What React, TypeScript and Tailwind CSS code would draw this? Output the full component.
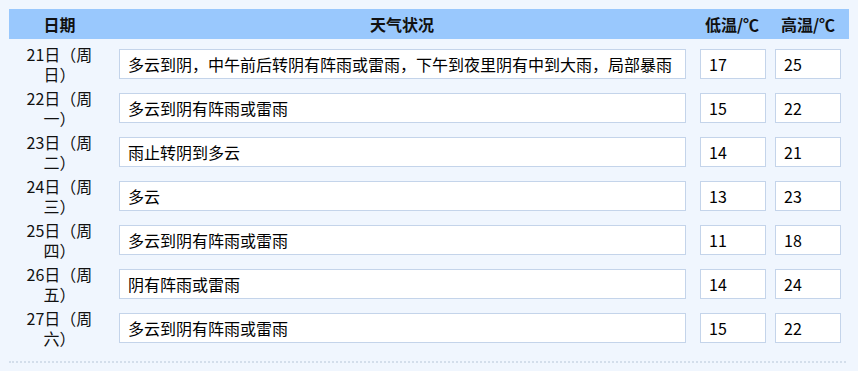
const rows = [
  { date: '21日（周日）', desc: '多云到阴，中午前后转阴有阵雨或雷雨，下午到夜里阴有中到大雨，局部暴雨', low: '17', high: '25' },
  { date: '22日（周一）', desc: '多云到阴有阵雨或雷雨', low: '15', high: '22' },
  { date: '23日（周二）', desc: '雨止转阴到多云', low: '14', high: '21' },
  { date: '24日（周三）', desc: '多云', low: '13', high: '23' },
  { date: '25日（周四）', desc: '多云到阴有阵雨或雷雨', low: '11', high: '18' },
  { date: '26日（周五）', desc: '阴有阵雨或雷雨', low: '14', high: '24' },
  { date: '27日（周六）', desc: '多云到阴有阵雨或雷雨', low: '15', high: '22' },
]

function Box({ value, className }: { value: string; className: string }) {
  return (
    <div className={`h-[30px] flex items-center bg-white border border-[#c4d4ea] pl-[8px] text-[16px] text-black whitespace-nowrap overflow-hidden ${className}`}>
      {value}
    </div>
  )
}

export default function App() {
  return (
    <div
      className="w-[858px] h-[371px] bg-[#f0f6fe] pt-[9px] px-[9px]"
      style={{ fontFamily: '"Noto Sans CJK SC", "Microsoft YaHei", sans-serif' }}
    >
      {/* header */}
      <div className="grid grid-cols-[101px_584px_76px_76px] h-[30px] items-center bg-[#99c8fd] text-[16px] font-bold text-[#111]">
        <div className="text-center">日期</div>
        <div className="text-center">天气状况</div>
        <div className="text-center">低温/℃</div>
        <div className="text-center">高温/℃</div>
      </div>

      <div className="mt-[3px]">
        {rows.map((r) => (
          <div key={r.date} className="grid grid-cols-[101px_584px_76px_76px] h-[44px] items-center">
            <div className="flex justify-center">
              <div className="w-[72px] text-center text-[16px] leading-[20px] text-[#111]">{r.date}</div>
            </div>
            <div className="pl-[9px]">
              <Box value={r.desc} className="w-[567px]" />
            </div>
            <div className="pl-[6px]">
              <Box value={r.low} className="w-[66px]" />
            </div>
            <div className="pl-[5px]">
              <Box value={r.high} className="w-[66px]" />
            </div>
          </div>
        ))}
      </div>

      <div className="mt-[11px] w-[837px] border-t-2 border-dotted border-[#d3deeb]" />
    </div>
  )
}
